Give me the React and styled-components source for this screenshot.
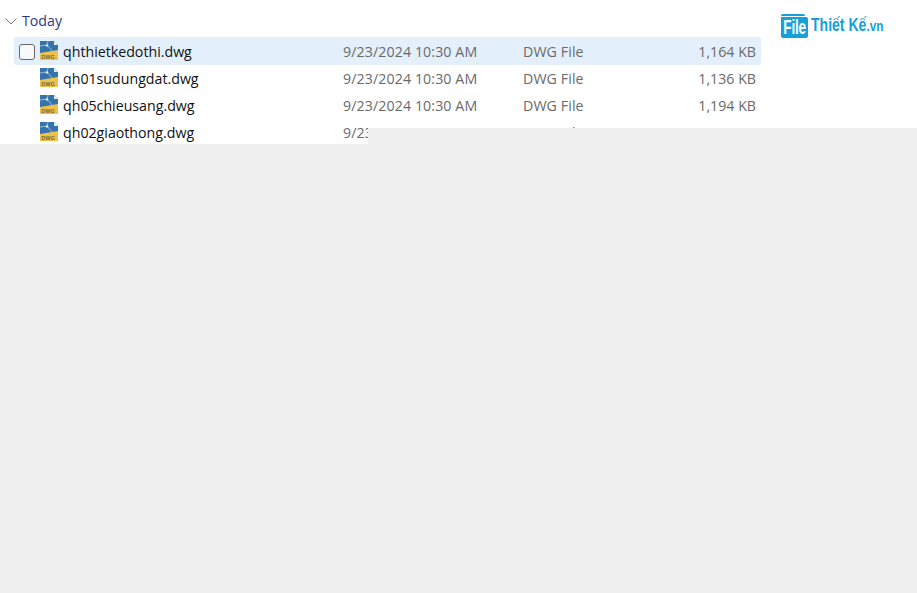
import React from 'react'
import styled, { createGlobalStyle } from 'styled-components'

const files = [
  { name: 'qhthietkedothi.dwg', size: '1,164 KB', selected: true },
  { name: 'qh01sudungdat.dwg', size: '1,136 KB' },
  { name: 'qh05chieusang.dwg', size: '1,194 KB' },
  { name: 'qh02giaothong.dwg', size: '844 KB' },
]

const GlobalStyle = createGlobalStyle`
  html, body {
    margin: 0;
    height: 100%;
    background: #efefef;
  }
  #root {
    height: 100%;
  }
`

const Page = styled.div`
  position: relative;
  width: 917px;
  height: 593px;
  overflow: hidden;
  background: #efefef;
  font-family: "Open Sans", "Noto Sans", sans-serif;
`

const Explorer = styled.div`
  height: 144px;
  box-sizing: border-box;
  padding-top: 10px;
  background: #fff;
  overflow: hidden;
`

const GroupHeader = styled.div`
  display: flex;
  align-items: center;
  height: 21px;
  margin-bottom: 7px;
  padding-left: 5px;
  gap: 5px;
  color: #2b3a80;
  font-size: 14.2px;
`

const FileRow = styled.div`
  display: grid;
  grid-template-columns: 26px 303px 180px 100px 138px;
  align-items: center;
  width: 747px;
  height: 27px;
  margin-left: 14px;
  border-radius: 2px;
  background: ${p => (p.$selected ? '#e3f0fb' : 'transparent')};
  box-shadow: ${p => (p.$selected ? '0 -1px 0 #e3f0fb' : 'none')};
  font-size: 14.2px;
`

const CheckBox = styled.span`
  justify-self: end;
  width: 14px;
  height: 14px;
  margin-right: 5px;
  border: 1px solid #6a6a6a;
  border-radius: 3px;
  background: #f7f9fb;
`

const NameCell = styled.span`
  display: flex;
  align-items: center;
  gap: 5px;
  color: #111;
  white-space: nowrap;

  svg {
    margin-bottom: 3px;
  }
`

const InfoCell = styled.span`
  color: #6a6a6a;
  letter-spacing: 0.1px;
  white-space: nowrap;
`

const SizeCell = styled(InfoCell)`
  padding-right: 5px;
  text-align: right;
  letter-spacing: 0;
`

const Cover = styled.div`
  position: absolute;
  left: 368px;
  top: 128px;
  right: 0;
  height: 16px;
  background: #efefef;
`

const Logo = styled.div`
  position: absolute;
  left: 781px;
  top: 13px;
  display: flex;
  align-items: flex-end;
  gap: 3px;
  color: #14a0da;
  font-family: "Liberation Sans", Arial, sans-serif;
  font-weight: 700;
`

const LogoFile = styled.span`
  position: relative;
  display: flex;
  justify-content: center;
  width: 27px;
  height: 21px;
  margin-top: 4px;
  border-radius: 0 2px 2px 2px;
  background: #14a0da;
  color: #fff;
  font-size: 20px;
  line-height: 21px;

  &::before {
    content: "";
    position: absolute;
    left: 0;
    right: 3px;
    top: -3px;
    height: 2px;
    border-radius: 2px 2px 0 0;
    background: #14a0da;
  }
`

const LogoFileText = styled.span`
  display: block;
  flex: none;
  transform: scaleX(0.68);
  letter-spacing: -0.3px;
`

const LogoText = styled.span`
  display: block;
  width: 72px;
  margin-bottom: 1px;
  font-size: 18px;
  line-height: 22px;
  transform: scaleX(0.78);
  transform-origin: left center;
  white-space: nowrap;
`

const LogoSuffix = styled.span`
  font-size: 15px;
`

const Chevron = () => (
  <svg width="12" height="12" viewBox="0 0 12 12" fill="none">
    <path d="M0.5 3.5 L6 9 L11.5 3.5" stroke="#7a7a7a" strokeWidth="1" />
  </svg>
)

const DwgIcon = () => (
  <svg width="18" height="19" viewBox="0 0 18 19">
    <path d="M0 0 H14 L18 4 V19 H0 Z" fill="#3573ab" />
    <path d="M14 0 L18 4 H14 Z" fill="#e6eef5" />
    <path d="M0 5 L7 4 L13 11 M7 4 L8 0" stroke="#9cc3e2" strokeWidth="0.9" fill="none" />
    <circle cx="7" cy="4.5" r="1.2" fill="#e3eff9" />
    <path d="M0 12 L18 9 V19 H0 Z" fill="#f1c04a" />
    <text x="8" y="17.5" fontSize="5.5" fontWeight="700" textAnchor="middle" fill="#7a6a35" fontFamily="Liberation Sans, sans-serif">DWG</text>
  </svg>
)

export default function App() {
  return (
    <Page>
      <GlobalStyle />
      <Explorer>
        <GroupHeader>
          <Chevron />
          Today
        </GroupHeader>
        {files.map(file => (
          <FileRow key={file.name} $selected={file.selected}>
            {file.selected ? <CheckBox /> : <span />}
            <NameCell>
              <DwgIcon />
              {file.name}
            </NameCell>
            <InfoCell>9/23/2024 10:30 AM</InfoCell>
            <InfoCell>DWG File</InfoCell>
            <SizeCell>{file.size}</SizeCell>
          </FileRow>
        ))}
      </Explorer>
      <Cover />
      <Logo>
        <LogoFile><LogoFileText>File</LogoFileText></LogoFile>
        <LogoText>Thiết Kế<LogoSuffix>.vn</LogoSuffix></LogoText>
      </Logo>
    </Page>
  )
}
